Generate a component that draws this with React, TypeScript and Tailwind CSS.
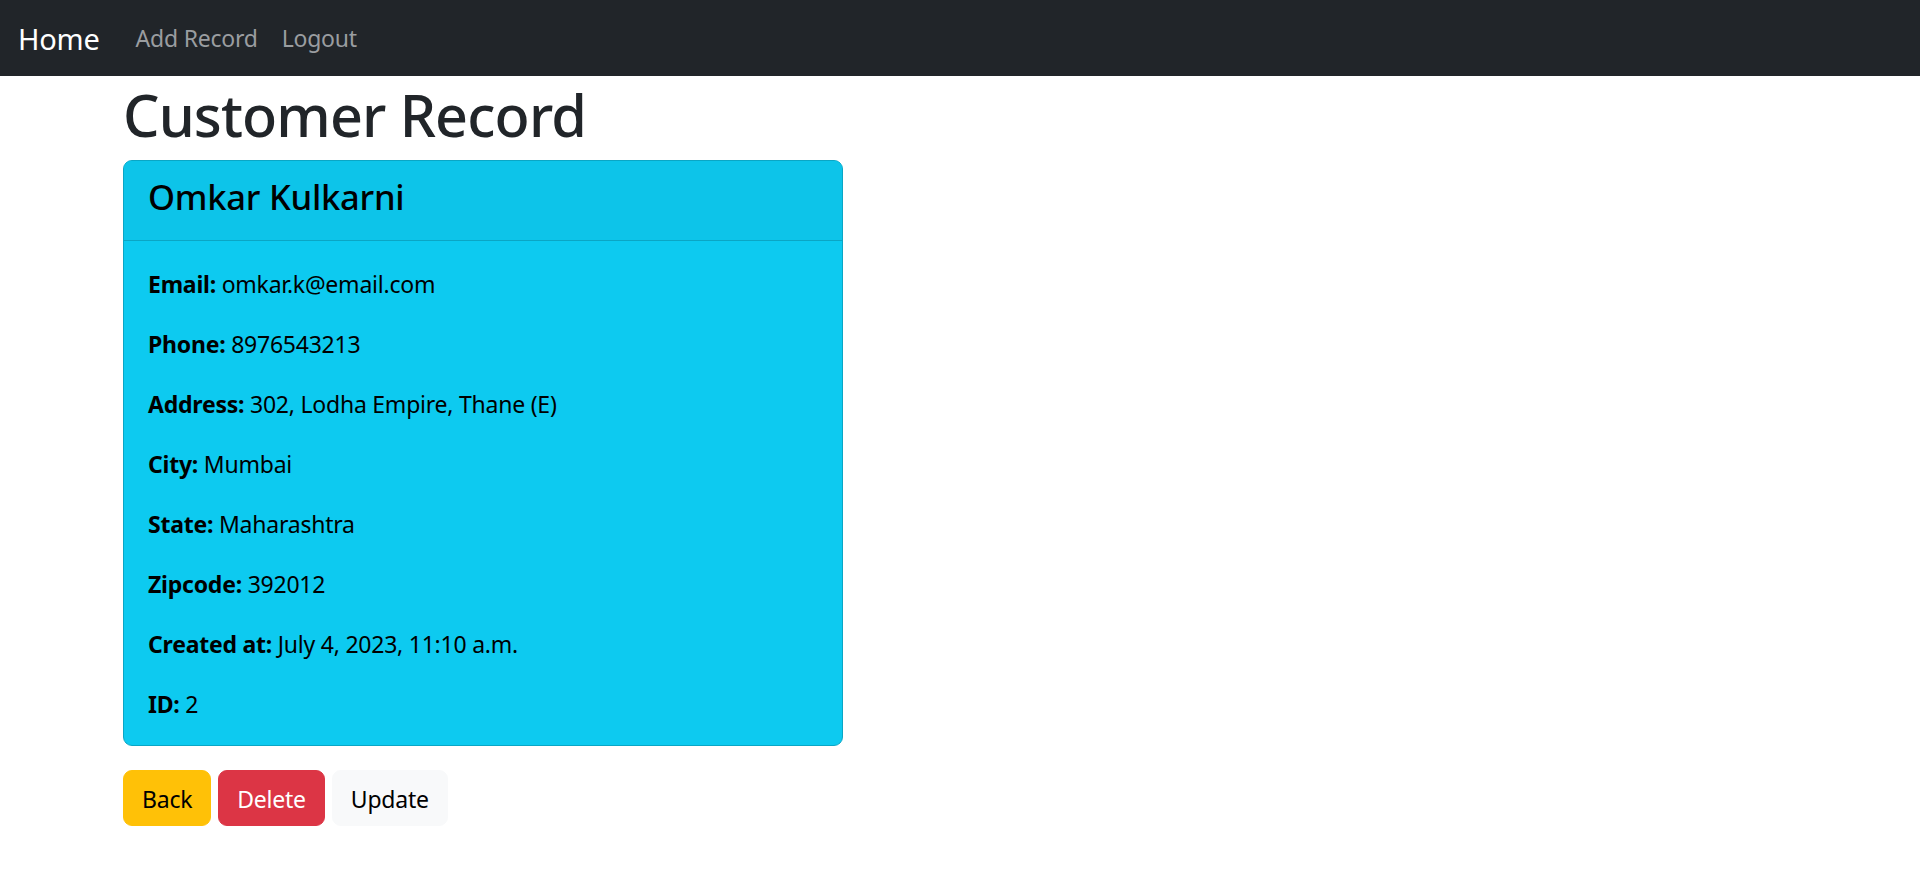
const fields: { label: string; value: string }[] = [
  { label: "Email:", value: "omkar.k@email.com" },
  { label: "Phone:", value: "8976543213" },
  { label: "Address:", value: "302, Lodha Empire, Thane (E)" },
  { label: "City:", value: "Mumbai" },
  { label: "State:", value: "Maharashtra" },
  { label: "Zipcode:", value: "392012" },
  { label: "Created at:", value: "July 4, 2023, 11:10 a.m." },
  { label: "ID:", value: "2" },
];

export default function App() {
  return (
    <div className="min-h-screen bg-white font-['Noto_Sans',sans-serif] text-[23px] tracking-[-0.01em] text-[#212529]">
      {/* Navbar */}
      <nav className="flex h-[76px] items-center bg-[#212529] px-[18px]">
        <a className="mr-[24px] text-[29px] leading-[45px] text-white">Home</a>
        <a className="px-[12px] leading-[36px] text-[#9a9da0]">Add Record</a>
        <a className="px-[12px] leading-[36px] text-[#9a9da0]">Logout</a>
      </nav>

      <div className="pl-[123px]">
        <h1 className="mb-[12px] pt-[7px] text-[57.5px] font-[530] leading-[65px] tracking-[-0.015em]">
          Customer Record
        </h1>

        {/* Record card */}
        <div className="w-[720px] overflow-hidden rounded-[9px] border border-[#0aa6c5] bg-[#0dcaf0] text-black">
          <div className="border-b border-[#0aa6c5] bg-[#0dc4e9] px-[24px] pb-[10px] pt-[14px]">
            <h4 className="mb-[12px] text-[34.5px] font-[520] leading-[43px]">
              Omkar Kulkarni
            </h4>
          </div>
          <div className="p-[24px]">
            {fields.map((f) => (
              <p key={f.label} className="mb-[24px] pt-[2px] leading-[34px] last:mb-0">
                <strong className="font-bold">{f.label}</strong> {f.value}
              </p>
            ))}
          </div>
        </div>

        <div className="mt-[24px] flex gap-[7px]">
          <button className="rounded-[9px] border border-[#ffc107] bg-[#ffc107] px-[18px] pb-[8px] pt-[10px] leading-[36px] text-black">
            Back
          </button>
          <button className="rounded-[9px] border border-[#dc3545] bg-[#dc3545] px-[18px] pb-[8px] pt-[10px] leading-[36px] text-white">
            Delete
          </button>
          <button className="rounded-[9px] border border-[#f8f9fa] bg-[#f8f9fa] px-[18px] pb-[8px] pt-[10px] leading-[36px] text-black">
            Update
          </button>
        </div>
      </div>
    </div>
  );
}
